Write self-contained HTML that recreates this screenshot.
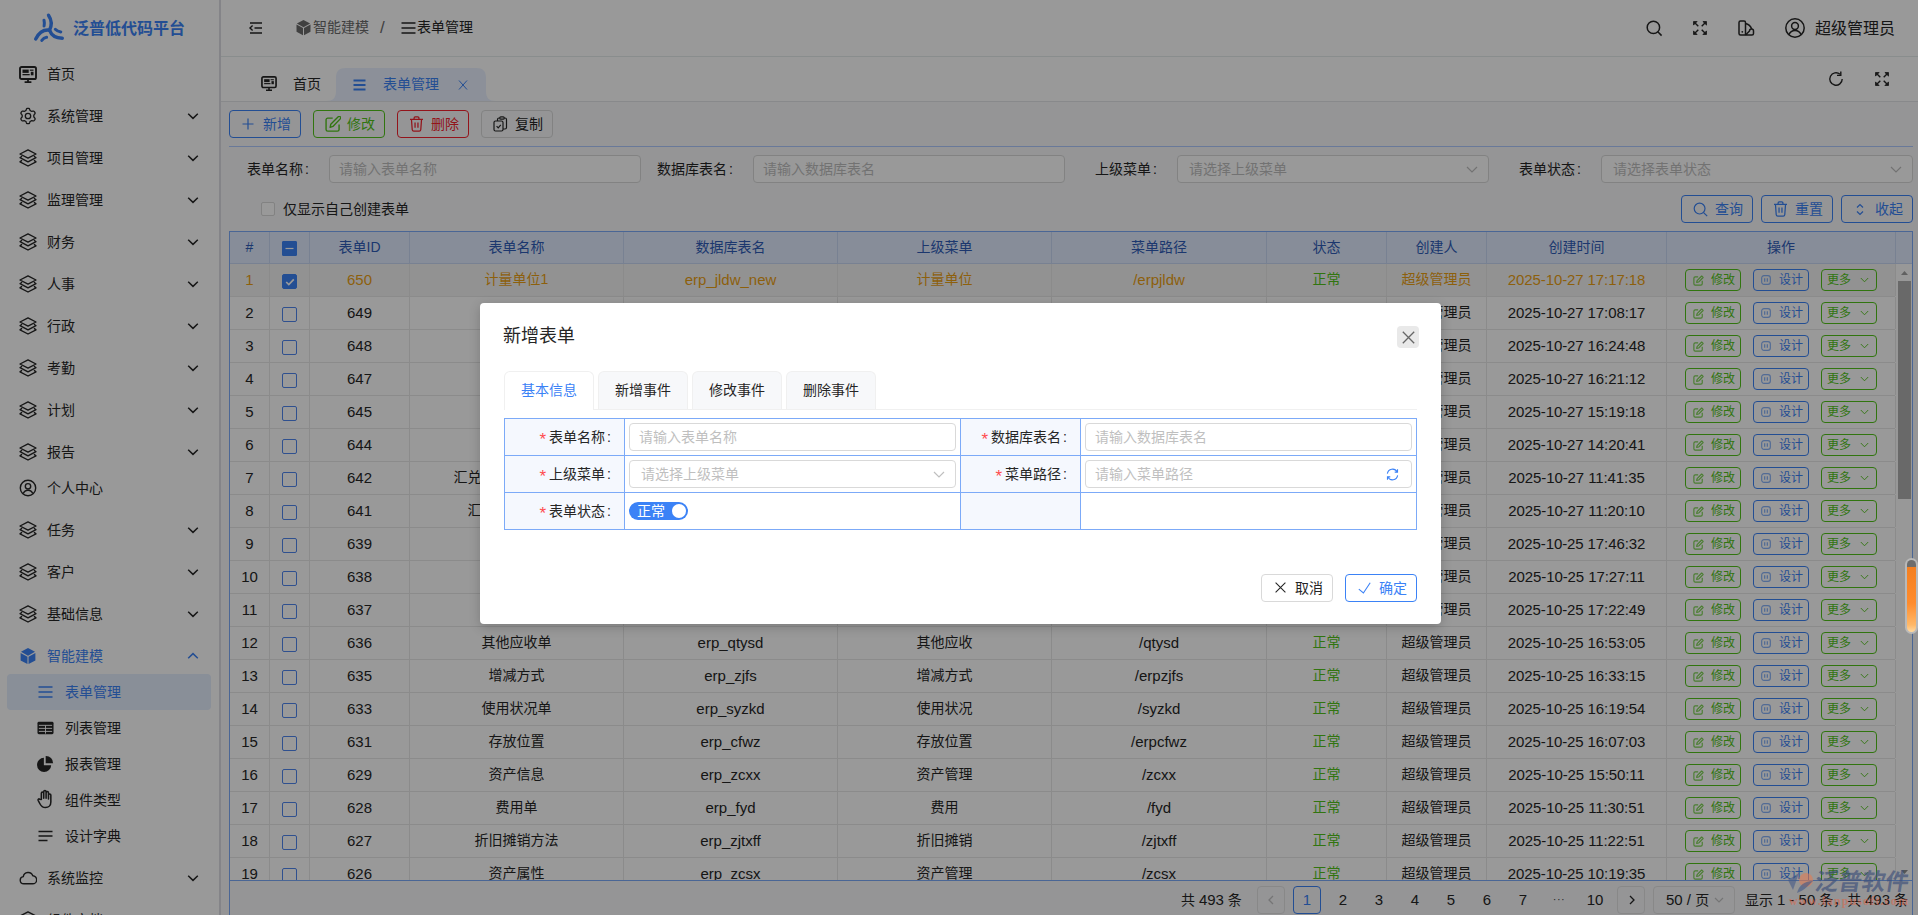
<!DOCTYPE html>
<html lang="zh-CN"><head><meta charset="utf-8"><title>泛普低代码平台</title>
<style>
*{box-sizing:border-box;margin:0;padding:0}
html,body{width:1918px;height:915px;overflow:hidden;background:#fff}
body{font-family:"Liberation Sans","Noto Sans CJK SC",sans-serif;font-size:14px;color:#262626;position:relative}
.abs{position:absolute}
i,b{font-style:normal;font-weight:normal}
#side{position:absolute;left:0;top:0;width:221px;height:915px;background:#fff;border-right:2px solid #dcdce3;overflow:hidden}
#logo{position:absolute;left:73px;top:17px;font-size:16px;font-weight:bold;color:#3b82f6;line-height:24px;white-space:nowrap}
.m{position:absolute;left:0;width:219px;height:36px;line-height:36px;color:#262626}
.m .mi{position:absolute;left:19px;top:9px;width:18px;height:18px}
.m .t{position:absolute;left:47px;top:0;white-space:nowrap}
.m .arr{position:absolute;left:187px;top:12px;width:12px;height:12px}
.m.on{color:#3b82f6}
.s{position:absolute;left:7px;width:204px;height:36px;line-height:36px;border-radius:4px;color:#262626}
.s .si{position:absolute;left:30px;top:10px;width:17px;height:16px}
.s .t{position:absolute;left:58px;top:0;white-space:nowrap}
.s.on{background:#e4eefe;color:#3b82f6}
#hdr{position:absolute;left:221px;top:0;width:1697px;height:57px;background:#fff;border-bottom:1px solid #e4ebec}
#tabs{position:absolute;left:221px;top:57px;width:1697px;height:45px;background:#fff;border-bottom:1px solid #e3e5e8}
#main{position:absolute;left:221px;top:102px;width:1697px;height:813px;background:#f8f9fb}
.btn{position:absolute;height:28px;line-height:26px;border:1px solid #d9d9d9;border-radius:4px;font-size:14px;white-space:nowrap}
.btn svg{position:absolute}
.btn .t{position:absolute;top:0}
.inp{position:absolute;height:28px;border:1px solid #d9d9d9;border-radius:4px;background:#fff;line-height:26px;color:#bfbfbf;padding-left:9px;font-size:14px;white-space:nowrap}
.lbl{position:absolute;line-height:28px;white-space:nowrap;color:#262626}
.c{margin-left:2px}
#wrap{position:absolute;left:229px;top:231px;width:1684px;height:700px;border:1px solid #7caaf8;border-bottom:none}
#tbl{position:absolute;left:230px;top:232px;width:1682px;height:648px;background:#fff;overflow:hidden}
.th{position:absolute;top:0;height:32px;line-height:30px;text-align:center;color:#2f5cb8;background:#e2ecff;border-right:1px solid #c9d8f4;border-bottom:1px solid #c9d8f4;white-space:nowrap}
.tr{position:absolute;left:0;width:1665px;height:33px;border-bottom:1px solid #e8e8e8;background:#fff}
.tr.sel{background:#f4f4f4;color:#eba014}
.td{position:absolute;top:0;height:32px;line-height:31px;text-align:center;border-right:1px solid #e8e8e8;white-space:nowrap;overflow:hidden}
.en{font-size:15px}
.dt{font-size:15px;letter-spacing:-.1px}
.ok{color:#52c41a}
.cb{position:absolute;left:12px;top:10px;width:15px;height:15px;border:1px solid #4f86ee;border-radius:2px;background:#fff}
.cb.on{background:#3b82f6;border-color:#3b82f6}
.ob{position:absolute;top:5px;height:22px;width:56px;border-radius:4px;border:1px solid;font-size:12px;line-height:21px;white-space:nowrap}
.ob.g{border-color:#52c41a;color:#52c41a}
.ob.b{border-color:#3b82f6;color:#3b82f6}
.ob svg{position:absolute}
.ob .t{position:absolute;top:0}
#mask{position:absolute;left:0;top:0;width:1918px;height:915px;background:rgba(0,0,0,.4)}
#modal{position:absolute;left:480px;top:303px;width:961px;height:321px;background:#fff;border-radius:4px;box-shadow:0 3px 12px rgba(0,0,0,.2)}
.mt{position:absolute;top:68px;height:39px;width:90px;border:1px solid #f0f0f0;border-bottom:none;border-radius:6px 6px 0 0;background:#f7f8fa;text-align:center;line-height:36px;color:#262626}
.mt.on{background:#fff;color:#3b82f6}
.fl{position:absolute;background:#f5f8fe;text-align:right;padding-right:13px;line-height:38px;white-space:nowrap;color:#262626}
.fl i{color:#ff4d4f;margin-right:3px;font-size:17px;position:relative;top:3px;line-height:20px}
.ln{position:absolute;background:#7caaf8}
.pg{position:absolute;top:886px;height:28px;line-height:27px;text-align:center;white-space:nowrap;color:#262626;font-size:15px}
</style></head><body>

<div id="side">
<svg class="abs" style="left:32px;top:12px;width:32px;height:32px" viewBox="0 0 32 32"><g fill="none" stroke="#3b82f6" stroke-linecap="round"><path d="M16.5 3.2c3.6 5.4 3.3 10.5 1 15" stroke-width="3.4"/><path d="M12 8.2c.5 2.2.5 4.2.1 5.8" stroke-width="3"/><path d="M17.5 18.2c-5.5-.8-10.5 2.3-13.8 8.8" stroke-width="3.4"/><path d="M14.6 25.3c-1.9.2-3.6 1.3-4.8 3.1" stroke-width="3"/><path d="M17.5 18.2c1.8 5 6.5 8 12.8 8" stroke-width="3.4"/><path d="M23.3 17.3c1.4 1.5 3.3 2.3 5.5 2.6" stroke-width="3"/></g></svg>
<div id="logo">泛普低代码平台</div>
<div class="m" style="top:56px"><svg class="mi" style="top:9.5px;height:17px" viewBox="0 0 18 17"><rect x="1" y="1" width="16" height="12" rx="1.6" fill="none" stroke="currentColor" stroke-width="1.9"/><rect x="3.5" y="3.6" width="6.2" height="3.3" fill="currentColor"/><rect x="10.8" y="3.6" width="3.7" height="1.2" fill="currentColor"/><rect x="11.8" y="5.8" width="2.7" height="3.5" fill="currentColor"/><rect x="3.5" y="8" width="7.2" height="1.3" fill="currentColor"/><path d="M9 13v2.4M5.6 16.1h6.8" stroke="currentColor" stroke-width="1.8" fill="none"/></svg><span class="t">首页</span></div>
<div class="m" style="top:98px"><svg class="mi" viewBox="0 0 18 18"><path d="M14.8 9 14.8 9.5 14.9 10 15.5 10.7 16.1 11.6 16 12.3 15.7 12.8 15.3 13.4 14.8 13.9 13.8 13.8 12.8 13.6 12.3 13.8 11.9 14 11.5 14.3 11 14.6 10.7 15.5 10.3 16.4 9.7 16.7 9 16.7 8.3 16.7 7.7 16.4 7.3 15.5 7 14.6 6.5 14.3 6.1 14 5.7 13.8 5.2 13.6 4.2 13.8 3.2 13.9 2.7 13.4 2.3 12.9 2 12.3 1.9 11.6 2.5 10.7 3.1 10 3.2 9.5 3.2 9 3.2 8.5 3.1 8 2.5 7.3 1.9 6.4 2 5.7 2.3 5.1 2.7 4.6 3.2 4.1 4.2 4.2 5.2 4.4 5.7 4.2 6.1 4 6.5 3.7 7 3.4 7.3 2.5 7.7 1.6 8.3 1.3 9 1.3 9.7 1.3 10.3 1.6 10.7 2.5 11 3.4 11.5 3.7 11.9 4 12.3 4.2 12.8 4.4 13.8 4.2 14.8 4.1 15.3 4.6 15.7 5.2 16 5.7 16.1 6.4 15.5 7.3 14.9 8 14.8 8.5Z" fill="none" stroke="currentColor" stroke-width="1.3" stroke-linejoin="round"/><circle cx="9" cy="9" r="2.7" fill="none" stroke="currentColor" stroke-width="1.3"/></svg><span class="t">系统管理</span><svg class="arr" viewBox="0 0 12 12"><path d="M1.2 3.8 6 8.4l4.8-4.6" fill="none" stroke="currentColor" stroke-width="1.5"/></svg></div>
<div class="m" style="top:140px"><svg class="mi" viewBox="0 0 18 18"><path d="M9 .9 17 5 9 9.1 1 5ZM2.6 7.5 1 8.7l8 4.2 8-4.2-1.6-1.2M2.6 11.6 1 12.8 9 17l8-4.2-1.6-1.2" fill="none" stroke="currentColor" stroke-width="1.4" stroke-linejoin="round" stroke-linecap="round"/></svg><span class="t">项目管理</span><svg class="arr" viewBox="0 0 12 12"><path d="M1.2 3.8 6 8.4l4.8-4.6" fill="none" stroke="currentColor" stroke-width="1.5"/></svg></div>
<div class="m" style="top:182px"><svg class="mi" viewBox="0 0 18 18"><path d="M9 .9 17 5 9 9.1 1 5ZM2.6 7.5 1 8.7l8 4.2 8-4.2-1.6-1.2M2.6 11.6 1 12.8 9 17l8-4.2-1.6-1.2" fill="none" stroke="currentColor" stroke-width="1.4" stroke-linejoin="round" stroke-linecap="round"/></svg><span class="t">监理管理</span><svg class="arr" viewBox="0 0 12 12"><path d="M1.2 3.8 6 8.4l4.8-4.6" fill="none" stroke="currentColor" stroke-width="1.5"/></svg></div>
<div class="m" style="top:224px"><svg class="mi" viewBox="0 0 18 18"><path d="M9 .9 17 5 9 9.1 1 5ZM2.6 7.5 1 8.7l8 4.2 8-4.2-1.6-1.2M2.6 11.6 1 12.8 9 17l8-4.2-1.6-1.2" fill="none" stroke="currentColor" stroke-width="1.4" stroke-linejoin="round" stroke-linecap="round"/></svg><span class="t">财务</span><svg class="arr" viewBox="0 0 12 12"><path d="M1.2 3.8 6 8.4l4.8-4.6" fill="none" stroke="currentColor" stroke-width="1.5"/></svg></div>
<div class="m" style="top:266px"><svg class="mi" viewBox="0 0 18 18"><path d="M9 .9 17 5 9 9.1 1 5ZM2.6 7.5 1 8.7l8 4.2 8-4.2-1.6-1.2M2.6 11.6 1 12.8 9 17l8-4.2-1.6-1.2" fill="none" stroke="currentColor" stroke-width="1.4" stroke-linejoin="round" stroke-linecap="round"/></svg><span class="t">人事</span><svg class="arr" viewBox="0 0 12 12"><path d="M1.2 3.8 6 8.4l4.8-4.6" fill="none" stroke="currentColor" stroke-width="1.5"/></svg></div>
<div class="m" style="top:308px"><svg class="mi" viewBox="0 0 18 18"><path d="M9 .9 17 5 9 9.1 1 5ZM2.6 7.5 1 8.7l8 4.2 8-4.2-1.6-1.2M2.6 11.6 1 12.8 9 17l8-4.2-1.6-1.2" fill="none" stroke="currentColor" stroke-width="1.4" stroke-linejoin="round" stroke-linecap="round"/></svg><span class="t">行政</span><svg class="arr" viewBox="0 0 12 12"><path d="M1.2 3.8 6 8.4l4.8-4.6" fill="none" stroke="currentColor" stroke-width="1.5"/></svg></div>
<div class="m" style="top:350px"><svg class="mi" viewBox="0 0 18 18"><path d="M9 .9 17 5 9 9.1 1 5ZM2.6 7.5 1 8.7l8 4.2 8-4.2-1.6-1.2M2.6 11.6 1 12.8 9 17l8-4.2-1.6-1.2" fill="none" stroke="currentColor" stroke-width="1.4" stroke-linejoin="round" stroke-linecap="round"/></svg><span class="t">考勤</span><svg class="arr" viewBox="0 0 12 12"><path d="M1.2 3.8 6 8.4l4.8-4.6" fill="none" stroke="currentColor" stroke-width="1.5"/></svg></div>
<div class="m" style="top:392px"><svg class="mi" viewBox="0 0 18 18"><path d="M9 .9 17 5 9 9.1 1 5ZM2.6 7.5 1 8.7l8 4.2 8-4.2-1.6-1.2M2.6 11.6 1 12.8 9 17l8-4.2-1.6-1.2" fill="none" stroke="currentColor" stroke-width="1.4" stroke-linejoin="round" stroke-linecap="round"/></svg><span class="t">计划</span><svg class="arr" viewBox="0 0 12 12"><path d="M1.2 3.8 6 8.4l4.8-4.6" fill="none" stroke="currentColor" stroke-width="1.5"/></svg></div>
<div class="m" style="top:434px"><svg class="mi" viewBox="0 0 18 18"><path d="M9 .9 17 5 9 9.1 1 5ZM2.6 7.5 1 8.7l8 4.2 8-4.2-1.6-1.2M2.6 11.6 1 12.8 9 17l8-4.2-1.6-1.2" fill="none" stroke="currentColor" stroke-width="1.4" stroke-linejoin="round" stroke-linecap="round"/></svg><span class="t">报告</span><svg class="arr" viewBox="0 0 12 12"><path d="M1.2 3.8 6 8.4l4.8-4.6" fill="none" stroke="currentColor" stroke-width="1.5"/></svg></div>
<div class="m" style="top:470px"><svg class="mi" viewBox="0 0 18 18"><circle cx="9" cy="9" r="7.7" fill="none" stroke="currentColor" stroke-width="1.4"/><circle cx="9" cy="7.3" r="2.7" fill="none" stroke="currentColor" stroke-width="1.4"/><path d="M4.2 14.6c.9-2.4 2.6-3.4 4.8-3.4s3.9 1 4.8 3.4" fill="none" stroke="currentColor" stroke-width="1.4"/></svg><span class="t">个人中心</span></div>
<div class="m" style="top:512px"><svg class="mi" viewBox="0 0 18 18"><path d="M9 .9 17 5 9 9.1 1 5ZM2.6 7.5 1 8.7l8 4.2 8-4.2-1.6-1.2M2.6 11.6 1 12.8 9 17l8-4.2-1.6-1.2" fill="none" stroke="currentColor" stroke-width="1.4" stroke-linejoin="round" stroke-linecap="round"/></svg><span class="t">任务</span><svg class="arr" viewBox="0 0 12 12"><path d="M1.2 3.8 6 8.4l4.8-4.6" fill="none" stroke="currentColor" stroke-width="1.5"/></svg></div>
<div class="m" style="top:554px"><svg class="mi" viewBox="0 0 18 18"><path d="M9 .9 17 5 9 9.1 1 5ZM2.6 7.5 1 8.7l8 4.2 8-4.2-1.6-1.2M2.6 11.6 1 12.8 9 17l8-4.2-1.6-1.2" fill="none" stroke="currentColor" stroke-width="1.4" stroke-linejoin="round" stroke-linecap="round"/></svg><span class="t">客户</span><svg class="arr" viewBox="0 0 12 12"><path d="M1.2 3.8 6 8.4l4.8-4.6" fill="none" stroke="currentColor" stroke-width="1.5"/></svg></div>
<div class="m" style="top:596px"><svg class="mi" viewBox="0 0 18 18"><path d="M9 .9 17 5 9 9.1 1 5ZM2.6 7.5 1 8.7l8 4.2 8-4.2-1.6-1.2M2.6 11.6 1 12.8 9 17l8-4.2-1.6-1.2" fill="none" stroke="currentColor" stroke-width="1.4" stroke-linejoin="round" stroke-linecap="round"/></svg><span class="t">基础信息</span><svg class="arr" viewBox="0 0 12 12"><path d="M1.2 3.8 6 8.4l4.8-4.6" fill="none" stroke="currentColor" stroke-width="1.5"/></svg></div>
<div class="m on" style="top:638px"><svg class="mi" viewBox="0 0 20 20"><path d="M10 1.2 17.8 5.4 10 9.6 2.2 5.4Z" fill="currentColor"/><path d="M1.8 6.6 9.4 10.7V19L1.8 14.9Z" fill="currentColor"/><path d="M18.2 6.6 10.6 10.7V19l7.6-4.1Z" fill="currentColor"/></svg><span class="t">智能建模</span><svg class="arr" viewBox="0 0 12 12"><path d="M1.2 8.2 6 3.6l4.8 4.6" fill="none" stroke="currentColor" stroke-width="1.5"/></svg></div>
<div class="m" style="top:860px"><svg class="mi" viewBox="0 0 18 18"><path d="M4.8 14.8a3.6 3.6 0 0 1-.5-7.16A4.9 4.9 0 0 1 13.8 6.8a4 4 0 0 1-.3 8Z" fill="none" stroke="currentColor" stroke-width="1.4" stroke-linejoin="round"/></svg><span class="t">系统监控</span><svg class="arr" viewBox="0 0 12 12"><path d="M1.2 3.8 6 8.4l4.8-4.6" fill="none" stroke="currentColor" stroke-width="1.5"/></svg></div>
<div class="m" style="top:902px"><svg class="mi" viewBox="0 0 18 18"><path d="M9 .9 17 5 9 9.1 1 5ZM2.6 7.5 1 8.7l8 4.2 8-4.2-1.6-1.2M2.6 11.6 1 12.8 9 17l8-4.2-1.6-1.2" fill="none" stroke="currentColor" stroke-width="1.4" stroke-linejoin="round" stroke-linecap="round"/></svg><span class="t">组件文档</span><svg class="arr" viewBox="0 0 12 12"><path d="M1.2 3.8 6 8.4l4.8-4.6" fill="none" stroke="currentColor" stroke-width="1.5"/></svg></div>
<div class="s on" style="top:674px"><svg class="si" viewBox="0 0 16 16"><path d="M1 3h14M1 8h14M1 13h14" stroke="currentColor" stroke-width="1.6" fill="none"/></svg><span class="t">表单管理</span></div>
<div class="s" style="top:710px"><svg class="si" viewBox="0 0 18 14"><rect x=".5" y=".5" width="17" height="13" rx="1.5" fill="currentColor"/><path d="M2 4.2h14M2 7.4h14M2 10.6h14" stroke="#fff" stroke-width="1"/><path d="M9 4.2v8.8" stroke="#fff" stroke-width="1"/></svg><span class="t">列表管理</span></div>
<div class="s" style="top:746px"><svg class="si" style="top:9px;width:18px;height:18px;left:29px" viewBox="0 0 16 16"><path d="M7 2.5A6.3 6.3 0 1 0 13.5 9H7Z" fill="currentColor"/><path d="M8.6.8A6.3 6.3 0 0 1 15.2 7.4H8.6Z" fill="currentColor"/></svg><span class="t">报表管理</span></div>
<div class="s" style="top:782px"><svg class="si" style="top:7px;height:21px;width:19px;left:29px" viewBox="0 0 16 17"><path d="M4.5 8.5V3.2a1 1 0 0 1 2 0V7.5 2a1 1 0 0 1 2 0V7.5 2.8a1 1 0 0 1 2 0V8 4.8a1 1 0 0 1 2 0V10.5c0 3-1.8 4.8-4.6 4.8-2.4 0-3.6-1.2-4.6-3.2L1.8 9.2c-.4-.9.6-1.6 1.3-.9Z" fill="none" stroke="currentColor" stroke-width="1.3" stroke-linejoin="round"/></svg><span class="t">组件类型</span></div>
<div class="s" style="top:818px"><svg class="si" viewBox="0 0 16 16"><path d="M1 3.5h14M1 8h14M1 12.5h9" stroke="currentColor" stroke-width="1.4" fill="none"/></svg><span class="t">设计字典</span></div>
</div>
<div id="hdr">
<svg class="abs" style="left:27px;top:20px;width:16px;height:16px" viewBox="0 0 16 16"><path d="M2 3h12M6.5 8H14M2 13h12M4.6 5.6 2 8l2.6 2.4" fill="none" stroke="#262626" stroke-width="1.4"/></svg>
<svg class="abs" style="left:74px;top:19px;width:17px;height:17px;color:#6b6b6b" viewBox="0 0 20 20"><path d="M10 1.2 17.8 5.4 10 9.6 2.2 5.4Z" fill="currentColor"/><path d="M1.8 6.6 9.4 10.7V19L1.8 14.9Z" fill="currentColor"/><path d="M18.2 6.6 10.6 10.7V19l7.6-4.1Z" fill="currentColor"/></svg>
<div class="abs" style="left:92px;top:16px;line-height:22px;color:#6b6b6b;white-space:nowrap">智能建模</div>
<div class="abs" style="left:159px;top:17px;line-height:22px;color:#6b6b6b;font-size:17px">/</div>
<svg class="abs" style="left:180px;top:21px;width:15px;height:14px" viewBox="0 0 15 14"><path d="M.5 2h14M.5 7h14M.5 12h14" stroke="#262626" stroke-width="1.5" fill="none"/></svg>
<div class="abs" style="left:196px;top:16px;line-height:22px;color:#262626;white-space:nowrap">表单管理</div>
<svg class="abs" style="left:1424px;top:19px;width:18px;height:18px" viewBox="0 0 18 18"><circle cx="8.4" cy="8.4" r="6.2" fill="none" stroke="#262626" stroke-width="1.5"/><path d="M12.8 12.8 16.6 16.6" stroke="#262626" stroke-width="1.5"/></svg>
<svg class="abs" style="left:1471px;top:20px;width:16px;height:16px" viewBox="0 0 16 16"><g fill="#262626" stroke="#262626" stroke-width="1.4"><path d="M1.5 1.5h3.6l-3.6 3.6ZM14.5 1.5v3.6l-3.6-3.6ZM14.5 14.5h-3.6l3.6-3.6ZM1.5 14.5v-3.6l3.6 3.6Z" stroke-width=".8" stroke-linejoin="round"/><path d="M3 3l3.3 3.3M13 3 9.7 6.3M13 13 9.7 9.7M3 13l3.3-3.3" fill="none"/></g></svg>
<svg class="abs" style="left:1516px;top:19px;width:18px;height:18px" viewBox="0 0 18 18"><g fill="none" stroke="#262626" stroke-width="1.5" stroke-linejoin="round"><path d="M8.5 16H3.5a1.5 1.5 0 0 1-1.5-1.5V3.5A1.5 1.5 0 0 1 3.5 2H7a1.5 1.5 0 0 1 1.5 1.5V16Z"/><path d="M8.5 4.5c3 .6 5.2 2.6 6.2 5.5"/><path d="M8.5 16H15a1.5 1.5 0 0 0 1.5-1.5V12a2 2 0 0 0-4 0l-4 4"/></g><circle cx="5.3" cy="12.8" r=".9" fill="#262626"/></svg>
<svg class="abs" style="left:1563px;top:17px;width:22px;height:22px" viewBox="0 0 22 22"><g fill="none" stroke="#262626" stroke-width="1.5"><circle cx="11" cy="11" r="9.2"/><circle cx="11" cy="9" r="3.4"/><path d="M4.8 17.8c1.2-3 3.4-4.4 6.2-4.4s5 1.4 6.2 4.4"/></g></svg>
<div class="abs" style="left:1594px;top:17px;font-size:16px;line-height:24px;color:#262626;white-space:nowrap">超级管理员</div>
</div>
<div id="tabs">
<svg class="abs" style="left:105px;top:11px;width:170px;height:33px" viewBox="0 0 170 33"><path d="M0 33C7 33 10 30 10 23V10C10 3 13 0 20 0H150c7 0 10 3 10 10V23c0 7 3 10 10 10Z" fill="#e9f1ff"/></svg>
<svg class="abs" style="left:40px;top:19px;width:16px;height:15px;color:#262626" viewBox="0 0 18 17"><rect x="1" y="1" width="16" height="12" rx="1.6" fill="none" stroke="currentColor" stroke-width="1.9"/><rect x="3.5" y="3.6" width="6.2" height="3.3" fill="currentColor"/><rect x="10.8" y="3.6" width="3.7" height="1.2" fill="currentColor"/><rect x="11.8" y="5.8" width="2.7" height="3.5" fill="currentColor"/><rect x="3.5" y="8" width="7.2" height="1.3" fill="currentColor"/><path d="M9 13v2.4M5.6 16.1h6.8" stroke="currentColor" stroke-width="1.8" fill="none"/></svg>
<div class="abs" style="left:72px;top:16px;line-height:22px;white-space:nowrap">首页</div>
<svg class="abs" style="left:132px;top:22px;width:13px;height:12px" viewBox="0 0 13 12"><path d="M.5 1.5h12M.5 6h12M.5 10.5h12" stroke="#3b82f6" stroke-width="1.8" fill="none"/></svg>
<div class="abs" style="left:162px;top:16px;line-height:22px;color:#3b82f6;white-space:nowrap">表单管理</div>
<svg class="abs" style="left:237px;top:23px;width:10px;height:10px" viewBox="0 0 10 10"><path d="M1 .5l8 9M9 .5 1 9.5" stroke="#3b82f6" stroke-width="1"/></svg>
<svg class="abs" style="left:1607px;top:14px;width:16px;height:16px" viewBox="0 0 16 16"><path d="M14.2 8a6.2 6.2 0 1 1-2.2-4.74" fill="none" stroke="#262626" stroke-width="1.4"/><path d="M12.8.6v3.8H9" fill="none" stroke="#262626" stroke-width="1.4"/></svg>
<svg class="abs" style="left:1653px;top:14px;width:16px;height:16px" viewBox="0 0 16 16"><g fill="#262626" stroke="#262626" stroke-width="1.4"><path d="M1.5 1.5h3.6l-3.6 3.6ZM14.5 1.5v3.6l-3.6-3.6ZM14.5 14.5h-3.6l3.6-3.6ZM1.5 14.5v-3.6l3.6 3.6Z" stroke-width=".8" stroke-linejoin="round"/><path d="M3 3l3.3 3.3M13 3 9.7 6.3M13 13 9.7 9.7M3 13l3.3-3.3" fill="none"/></g></svg>
</div>
<div id="main"></div>
<div class="btn" style="left:229px;top:110px;width:72px;border-color:#3b82f6;color:#3b82f6"><svg style="left:12px;top:7px;width:12px;height:12px" viewBox="0 0 12 12"><path d="M6 .5v11M.5 6h11" stroke="currentColor" stroke-width="1.2"/></svg><span class="t" style="left:33px">新增</span></div>
<div class="btn" style="left:313px;top:110px;width:72px;border-color:#52c41a;color:#52c41a"><svg style="left:11px;top:5px;width:16px;height:16px" viewBox="0 0 15 15"><path d="M7.2 2H2.6A1.6 1.6 0 0 0 1 3.6v9A1.6 1.6 0 0 0 2.6 14.2h9a1.6 1.6 0 0 0 1.6-1.6V8" fill="none" stroke="currentColor" stroke-width="1.3"/><path d="M4.8 10.6 5.4 7.8 12.4.8a1.3 1.3 0 0 1 1.9 1.9L7.4 9.8Z" fill="none" stroke="currentColor" stroke-width="1.3" stroke-linejoin="round"/></svg><span class="t" style="left:33px">修改</span></div>
<div class="btn" style="left:397px;top:110px;width:72px;border-color:#f5222d;color:#f5222d"><svg style="left:11px;top:5px;width:15px;height:16px" viewBox="0 0 15 16.5"><path d="M.8 3.6h13.4M5 3.6V2.2A1.2 1.2 0 0 1 6.2 1h2.6A1.2 1.2 0 0 1 10 2.2v1.4M2.3 3.6l.8 10.6a1.6 1.6 0 0 0 1.6 1.4h5.6a1.6 1.6 0 0 0 1.6-1.4l.8-10.6M6 6.8v5.4M9 6.8v5.4" fill="none" stroke="currentColor" stroke-width="1.3"/></svg><span class="t" style="left:33px">删除</span></div>
<div class="btn" style="left:481px;top:110px;width:72px;border-color:#d9d9d9;color:#262626"><svg style="left:11px;top:5px;width:15px;height:16px" viewBox="0 0 15 16"><g fill="none" stroke="currentColor" stroke-width="1.2"><rect x="1" y="5" width="9" height="10" rx="1.5"/><path d="M4.5 5V3.5A1.5 1.5 0 0 1 6 2h.8M11.2 2H12a1.5 1.5 0 0 1 1.5 1.5v8A1.5 1.5 0 0 1 12 13h-2"/><rect x="6.8" y=".8" width="4.4" height="2.4" rx="1"/><path d="M3.6 10.2l1.6 1.6 2.6-3"/></g></svg><span class="t" style="left:33px">复制</span></div>
<div class="abs" style="left:229px;top:146px;width:1684px;height:1px;background:#afcaff"></div>
<div class="lbl" style="left:247px;top:155px">表单名称<b class="c">:</b></div><div class="inp" style="left:329px;top:155px;width:312px">请输入表单名称</div>
<div class="lbl" style="left:657px;top:155px">数据库表名<b class="c">:</b></div><div class="inp" style="left:753px;top:155px;width:312px">请输入数据库表名</div>
<div class="lbl" style="left:1095px;top:155px">上级菜单<b class="c">:</b></div><div class="inp" style="left:1177px;top:155px;width:312px;padding-left:11px">请选择上级菜单<svg class="abs" style="right:10px;top:9px;width:12px;height:9px" viewBox="0 0 12 9"><path d="M1 2l5 5 5-5" fill="none" stroke="#bfbfbf" stroke-width="1.2"/></svg></div>
<div class="lbl" style="left:1519px;top:155px">表单状态<b class="c">:</b></div><div class="inp" style="left:1601px;top:155px;width:312px;padding-left:11px">请选择表单状态<svg class="abs" style="right:10px;top:9px;width:12px;height:9px" viewBox="0 0 12 9"><path d="M1 2l5 5 5-5" fill="none" stroke="#bfbfbf" stroke-width="1.2"/></svg></div>
<div class="abs" style="left:261px;top:202px;width:14px;height:14px;border:1px solid #d9d9d9;border-radius:2px;background:#fff"></div>
<div class="lbl" style="left:283px;top:195px">仅显示自己创建表单</div>
<div class="btn" style="left:1681px;top:195px;width:72px;border-color:#3b82f6;color:#3b82f6"><svg style="left:11px;top:6px;width:15px;height:15px" viewBox="0 0 15 15"><circle cx="6.6" cy="6.6" r="5.4" fill="none" stroke="currentColor" stroke-width="1.2"/><path d="M10.6 10.6 14.2 14.2" stroke="currentColor" stroke-width="1.2"/></svg><span class="t" style="left:33px">查询</span></div>
<div class="btn" style="left:1761px;top:195px;width:72px;border-color:#3b82f6;color:#3b82f6"><svg style="left:11px;top:5px;width:15px;height:16px" viewBox="0 0 15 16.5"><path d="M.8 3.6h13.4M5 3.6V2.2A1.2 1.2 0 0 1 6.2 1h2.6A1.2 1.2 0 0 1 10 2.2v1.4M2.3 3.6l.8 10.6a1.6 1.6 0 0 0 1.6 1.4h5.6a1.6 1.6 0 0 0 1.6-1.4l.8-10.6M6 6.8v5.4M9 6.8v5.4" fill="none" stroke="currentColor" stroke-width="1.3"/></svg><span class="t" style="left:33px">重置</span></div>
<div class="btn" style="left:1841px;top:195px;width:72px;border-color:#3b82f6;color:#3b82f6"><svg style="left:14px;top:7px;width:8px;height:13px" viewBox="0 0 8 13"><path d="M1 4.5 4 1.5l3 3M1 8.5l3 3 3-3" fill="none" stroke="currentColor" stroke-width="1.2"/></svg><span class="t" style="left:33px">收起</span></div>
<div id="wrap"></div>
<div id="tbl">
<div class="th" style="left:0px;width:40px">#</div>
<div class="th" style="left:40px;width:40px"><span class="cb on" style="top:9px;border-radius:1px"><svg class="abs" style="left:2px;top:5px;width:9px;height:3px" viewBox="0 0 9 3"><path d="M.5 1.5h8" stroke="#fff" stroke-width="1.2"/></svg></span></div>
<div class="th" style="left:80px;width:100px">表单ID</div>
<div class="th" style="left:180px;width:214px">表单名称</div>
<div class="th" style="left:394px;width:214px">数据库表名</div>
<div class="th" style="left:608px;width:214px">上级菜单</div>
<div class="th" style="left:822px;width:215px">菜单路径</div>
<div class="th" style="left:1037px;width:120px">状态</div>
<div class="th" style="left:1157px;width:100px">创建人</div>
<div class="th" style="left:1257px;width:180px">创建时间</div>
<div class="th" style="left:1437px;width:229px">操作</div>
<div class="th" style="left:1666px;width:17px;border-right:none"></div>
<div class="tr sel" style="top:32px">
<div class="td en" style="left:0px;width:40px">1</div>
<div class="td " style="left:40px;width:40px"><span class="cb on"><svg class="abs" style="left:1.5px;top:3px;width:10px;height:8px" viewBox="0 0 10 8"><path d="M1.2 4l2.6 2.6L8.8 1.4" fill="none" stroke="#fff" stroke-width="1.7"/></svg></span></div>
<div class="td en" style="left:80px;width:100px">650</div>
<div class="td " style="left:180px;width:214px">计量单位1</div>
<div class="td en" style="left:394px;width:214px">erp_jldw_new</div>
<div class="td " style="left:608px;width:214px">计量单位</div>
<div class="td en" style="left:822px;width:215px">/erpjldw</div>
<div class="td " style="left:1037px;width:120px"><span class="ok">正常</span></div>
<div class="td " style="left:1157px;width:100px">超级管理员</div>
<div class="td dt" style="left:1257px;width:180px">2025-10-27 17:17:18</div>
<div class="td " style="left:1437px;width:229px"><span class="ob g" style="left:18px"><svg style="left:7px;top:5px;width:11px;height:11px;opacity:.75" viewBox="0 0 15 15"><path d="M7 2.5H3A1.8 1.8 0 0 0 1.2 4.3V12A1.8 1.8 0 0 0 3 13.8h7.8A1.8 1.8 0 0 0 12.6 12V8" fill="none" stroke="currentColor" stroke-width="1.6"/><path d="M5 10.2 5.6 7.6 11.8 1.4l2 2L7.6 9.6Z" fill="none" stroke="currentColor" stroke-width="1.6" stroke-linejoin="round"/></svg><span class="t" style="left:25px">修改</span></span><span class="ob b" style="left:86px"><svg style="left:7px;top:5px;width:10px;height:10px;opacity:.6" viewBox="0 0 12 12"><rect x=".8" y=".8" width="10.4" height="10.4" rx="2.8" fill="none" stroke="currentColor" stroke-width="1.4"/><path d="M4.4 4v4M7.6 4v4" stroke="currentColor" stroke-width="1.5"/></svg><span class="t" style="left:25px">设计</span></span><span class="ob g" style="left:154px"><span class="t" style="left:5px">更多</span><svg style="left:38px;top:7px;width:9px;height:6px" viewBox="0 0 9 6"><path d="M.8 1l3.7 3.8L8.2 1" fill="none" stroke="currentColor" stroke-width=".9"/></svg></span></div>
</div>
<div class="tr" style="top:65px">
<div class="td en" style="left:0px;width:40px">2</div>
<div class="td " style="left:40px;width:40px"><span class="cb"></span></div>
<div class="td en" style="left:80px;width:100px">649</div>
<div class="td " style="left:180px;width:214px">计量单位</div>
<div class="td en" style="left:394px;width:214px">erp_jldw</div>
<div class="td " style="left:608px;width:214px">基础数据</div>
<div class="td en" style="left:822px;width:215px">/jldw</div>
<div class="td " style="left:1037px;width:120px"><span class="ok">正常</span></div>
<div class="td " style="left:1157px;width:100px">超级管理员</div>
<div class="td dt" style="left:1257px;width:180px">2025-10-27 17:08:17</div>
<div class="td " style="left:1437px;width:229px"><span class="ob g" style="left:18px"><svg style="left:7px;top:5px;width:11px;height:11px;opacity:.75" viewBox="0 0 15 15"><path d="M7 2.5H3A1.8 1.8 0 0 0 1.2 4.3V12A1.8 1.8 0 0 0 3 13.8h7.8A1.8 1.8 0 0 0 12.6 12V8" fill="none" stroke="currentColor" stroke-width="1.6"/><path d="M5 10.2 5.6 7.6 11.8 1.4l2 2L7.6 9.6Z" fill="none" stroke="currentColor" stroke-width="1.6" stroke-linejoin="round"/></svg><span class="t" style="left:25px">修改</span></span><span class="ob b" style="left:86px"><svg style="left:7px;top:5px;width:10px;height:10px;opacity:.6" viewBox="0 0 12 12"><rect x=".8" y=".8" width="10.4" height="10.4" rx="2.8" fill="none" stroke="currentColor" stroke-width="1.4"/><path d="M4.4 4v4M7.6 4v4" stroke="currentColor" stroke-width="1.5"/></svg><span class="t" style="left:25px">设计</span></span><span class="ob g" style="left:154px"><span class="t" style="left:5px">更多</span><svg style="left:38px;top:7px;width:9px;height:6px" viewBox="0 0 9 6"><path d="M.8 1l3.7 3.8L8.2 1" fill="none" stroke="currentColor" stroke-width=".9"/></svg></span></div>
</div>
<div class="tr" style="top:98px">
<div class="td en" style="left:0px;width:40px">3</div>
<div class="td " style="left:40px;width:40px"><span class="cb"></span></div>
<div class="td en" style="left:80px;width:100px">648</div>
<div class="td " style="left:180px;width:214px">币种管理</div>
<div class="td en" style="left:394px;width:214px">erp_bzgl</div>
<div class="td " style="left:608px;width:214px">基础数据</div>
<div class="td en" style="left:822px;width:215px">/bzgl</div>
<div class="td " style="left:1037px;width:120px"><span class="ok">正常</span></div>
<div class="td " style="left:1157px;width:100px">超级管理员</div>
<div class="td dt" style="left:1257px;width:180px">2025-10-27 16:24:48</div>
<div class="td " style="left:1437px;width:229px"><span class="ob g" style="left:18px"><svg style="left:7px;top:5px;width:11px;height:11px;opacity:.75" viewBox="0 0 15 15"><path d="M7 2.5H3A1.8 1.8 0 0 0 1.2 4.3V12A1.8 1.8 0 0 0 3 13.8h7.8A1.8 1.8 0 0 0 12.6 12V8" fill="none" stroke="currentColor" stroke-width="1.6"/><path d="M5 10.2 5.6 7.6 11.8 1.4l2 2L7.6 9.6Z" fill="none" stroke="currentColor" stroke-width="1.6" stroke-linejoin="round"/></svg><span class="t" style="left:25px">修改</span></span><span class="ob b" style="left:86px"><svg style="left:7px;top:5px;width:10px;height:10px;opacity:.6" viewBox="0 0 12 12"><rect x=".8" y=".8" width="10.4" height="10.4" rx="2.8" fill="none" stroke="currentColor" stroke-width="1.4"/><path d="M4.4 4v4M7.6 4v4" stroke="currentColor" stroke-width="1.5"/></svg><span class="t" style="left:25px">设计</span></span><span class="ob g" style="left:154px"><span class="t" style="left:5px">更多</span><svg style="left:38px;top:7px;width:9px;height:6px" viewBox="0 0 9 6"><path d="M.8 1l3.7 3.8L8.2 1" fill="none" stroke="currentColor" stroke-width=".9"/></svg></span></div>
</div>
<div class="tr" style="top:131px">
<div class="td en" style="left:0px;width:40px">4</div>
<div class="td " style="left:40px;width:40px"><span class="cb"></span></div>
<div class="td en" style="left:80px;width:100px">647</div>
<div class="td " style="left:180px;width:214px">汇率管理</div>
<div class="td en" style="left:394px;width:214px">erp_hlgl</div>
<div class="td " style="left:608px;width:214px">基础数据</div>
<div class="td en" style="left:822px;width:215px">/hlgl</div>
<div class="td " style="left:1037px;width:120px"><span class="ok">正常</span></div>
<div class="td " style="left:1157px;width:100px">超级管理员</div>
<div class="td dt" style="left:1257px;width:180px">2025-10-27 16:21:12</div>
<div class="td " style="left:1437px;width:229px"><span class="ob g" style="left:18px"><svg style="left:7px;top:5px;width:11px;height:11px;opacity:.75" viewBox="0 0 15 15"><path d="M7 2.5H3A1.8 1.8 0 0 0 1.2 4.3V12A1.8 1.8 0 0 0 3 13.8h7.8A1.8 1.8 0 0 0 12.6 12V8" fill="none" stroke="currentColor" stroke-width="1.6"/><path d="M5 10.2 5.6 7.6 11.8 1.4l2 2L7.6 9.6Z" fill="none" stroke="currentColor" stroke-width="1.6" stroke-linejoin="round"/></svg><span class="t" style="left:25px">修改</span></span><span class="ob b" style="left:86px"><svg style="left:7px;top:5px;width:10px;height:10px;opacity:.6" viewBox="0 0 12 12"><rect x=".8" y=".8" width="10.4" height="10.4" rx="2.8" fill="none" stroke="currentColor" stroke-width="1.4"/><path d="M4.4 4v4M7.6 4v4" stroke="currentColor" stroke-width="1.5"/></svg><span class="t" style="left:25px">设计</span></span><span class="ob g" style="left:154px"><span class="t" style="left:5px">更多</span><svg style="left:38px;top:7px;width:9px;height:6px" viewBox="0 0 9 6"><path d="M.8 1l3.7 3.8L8.2 1" fill="none" stroke="currentColor" stroke-width=".9"/></svg></span></div>
</div>
<div class="tr" style="top:164px">
<div class="td en" style="left:0px;width:40px">5</div>
<div class="td " style="left:40px;width:40px"><span class="cb"></span></div>
<div class="td en" style="left:80px;width:100px">645</div>
<div class="td " style="left:180px;width:214px">结算方式</div>
<div class="td en" style="left:394px;width:214px">erp_jsfs</div>
<div class="td " style="left:608px;width:214px">基础数据</div>
<div class="td en" style="left:822px;width:215px">/jsfs</div>
<div class="td " style="left:1037px;width:120px"><span class="ok">正常</span></div>
<div class="td " style="left:1157px;width:100px">超级管理员</div>
<div class="td dt" style="left:1257px;width:180px">2025-10-27 15:19:18</div>
<div class="td " style="left:1437px;width:229px"><span class="ob g" style="left:18px"><svg style="left:7px;top:5px;width:11px;height:11px;opacity:.75" viewBox="0 0 15 15"><path d="M7 2.5H3A1.8 1.8 0 0 0 1.2 4.3V12A1.8 1.8 0 0 0 3 13.8h7.8A1.8 1.8 0 0 0 12.6 12V8" fill="none" stroke="currentColor" stroke-width="1.6"/><path d="M5 10.2 5.6 7.6 11.8 1.4l2 2L7.6 9.6Z" fill="none" stroke="currentColor" stroke-width="1.6" stroke-linejoin="round"/></svg><span class="t" style="left:25px">修改</span></span><span class="ob b" style="left:86px"><svg style="left:7px;top:5px;width:10px;height:10px;opacity:.6" viewBox="0 0 12 12"><rect x=".8" y=".8" width="10.4" height="10.4" rx="2.8" fill="none" stroke="currentColor" stroke-width="1.4"/><path d="M4.4 4v4M7.6 4v4" stroke="currentColor" stroke-width="1.5"/></svg><span class="t" style="left:25px">设计</span></span><span class="ob g" style="left:154px"><span class="t" style="left:5px">更多</span><svg style="left:38px;top:7px;width:9px;height:6px" viewBox="0 0 9 6"><path d="M.8 1l3.7 3.8L8.2 1" fill="none" stroke="currentColor" stroke-width=".9"/></svg></span></div>
</div>
<div class="tr" style="top:197px">
<div class="td en" style="left:0px;width:40px">6</div>
<div class="td " style="left:40px;width:40px"><span class="cb"></span></div>
<div class="td en" style="left:80px;width:100px">644</div>
<div class="td " style="left:180px;width:214px">凭证类别</div>
<div class="td en" style="left:394px;width:214px">erp_pzlb</div>
<div class="td " style="left:608px;width:214px">基础数据</div>
<div class="td en" style="left:822px;width:215px">/pzlb</div>
<div class="td " style="left:1037px;width:120px"><span class="ok">正常</span></div>
<div class="td " style="left:1157px;width:100px">超级管理员</div>
<div class="td dt" style="left:1257px;width:180px">2025-10-27 14:20:41</div>
<div class="td " style="left:1437px;width:229px"><span class="ob g" style="left:18px"><svg style="left:7px;top:5px;width:11px;height:11px;opacity:.75" viewBox="0 0 15 15"><path d="M7 2.5H3A1.8 1.8 0 0 0 1.2 4.3V12A1.8 1.8 0 0 0 3 13.8h7.8A1.8 1.8 0 0 0 12.6 12V8" fill="none" stroke="currentColor" stroke-width="1.6"/><path d="M5 10.2 5.6 7.6 11.8 1.4l2 2L7.6 9.6Z" fill="none" stroke="currentColor" stroke-width="1.6" stroke-linejoin="round"/></svg><span class="t" style="left:25px">修改</span></span><span class="ob b" style="left:86px"><svg style="left:7px;top:5px;width:10px;height:10px;opacity:.6" viewBox="0 0 12 12"><rect x=".8" y=".8" width="10.4" height="10.4" rx="2.8" fill="none" stroke="currentColor" stroke-width="1.4"/><path d="M4.4 4v4M7.6 4v4" stroke="currentColor" stroke-width="1.5"/></svg><span class="t" style="left:25px">设计</span></span><span class="ob g" style="left:154px"><span class="t" style="left:5px">更多</span><svg style="left:38px;top:7px;width:9px;height:6px" viewBox="0 0 9 6"><path d="M.8 1l3.7 3.8L8.2 1" fill="none" stroke="currentColor" stroke-width=".9"/></svg></span></div>
</div>
<div class="tr" style="top:230px">
<div class="td en" style="left:0px;width:40px">7</div>
<div class="td " style="left:40px;width:40px"><span class="cb"></span></div>
<div class="td en" style="left:80px;width:100px">642</div>
<div class="td " style="left:180px;width:214px">汇兑损益结转凭证单</div>
<div class="td en" style="left:394px;width:214px">erp_hdsyjz</div>
<div class="td " style="left:608px;width:214px">总账管理</div>
<div class="td en" style="left:822px;width:215px">/hdsyjz</div>
<div class="td " style="left:1037px;width:120px"><span class="ok">正常</span></div>
<div class="td " style="left:1157px;width:100px">超级管理员</div>
<div class="td dt" style="left:1257px;width:180px">2025-10-27 11:41:35</div>
<div class="td " style="left:1437px;width:229px"><span class="ob g" style="left:18px"><svg style="left:7px;top:5px;width:11px;height:11px;opacity:.75" viewBox="0 0 15 15"><path d="M7 2.5H3A1.8 1.8 0 0 0 1.2 4.3V12A1.8 1.8 0 0 0 3 13.8h7.8A1.8 1.8 0 0 0 12.6 12V8" fill="none" stroke="currentColor" stroke-width="1.6"/><path d="M5 10.2 5.6 7.6 11.8 1.4l2 2L7.6 9.6Z" fill="none" stroke="currentColor" stroke-width="1.6" stroke-linejoin="round"/></svg><span class="t" style="left:25px">修改</span></span><span class="ob b" style="left:86px"><svg style="left:7px;top:5px;width:10px;height:10px;opacity:.6" viewBox="0 0 12 12"><rect x=".8" y=".8" width="10.4" height="10.4" rx="2.8" fill="none" stroke="currentColor" stroke-width="1.4"/><path d="M4.4 4v4M7.6 4v4" stroke="currentColor" stroke-width="1.5"/></svg><span class="t" style="left:25px">设计</span></span><span class="ob g" style="left:154px"><span class="t" style="left:5px">更多</span><svg style="left:38px;top:7px;width:9px;height:6px" viewBox="0 0 9 6"><path d="M.8 1l3.7 3.8L8.2 1" fill="none" stroke="currentColor" stroke-width=".9"/></svg></span></div>
</div>
<div class="tr" style="top:263px">
<div class="td en" style="left:0px;width:40px">8</div>
<div class="td " style="left:40px;width:40px"><span class="cb"></span></div>
<div class="td en" style="left:80px;width:100px">641</div>
<div class="td " style="left:180px;width:214px">汇兑损益结转单</div>
<div class="td en" style="left:394px;width:214px">erp_hdsy</div>
<div class="td " style="left:608px;width:214px">总账管理</div>
<div class="td en" style="left:822px;width:215px">/hdsy</div>
<div class="td " style="left:1037px;width:120px"><span class="ok">正常</span></div>
<div class="td " style="left:1157px;width:100px">超级管理员</div>
<div class="td dt" style="left:1257px;width:180px">2025-10-27 11:20:10</div>
<div class="td " style="left:1437px;width:229px"><span class="ob g" style="left:18px"><svg style="left:7px;top:5px;width:11px;height:11px;opacity:.75" viewBox="0 0 15 15"><path d="M7 2.5H3A1.8 1.8 0 0 0 1.2 4.3V12A1.8 1.8 0 0 0 3 13.8h7.8A1.8 1.8 0 0 0 12.6 12V8" fill="none" stroke="currentColor" stroke-width="1.6"/><path d="M5 10.2 5.6 7.6 11.8 1.4l2 2L7.6 9.6Z" fill="none" stroke="currentColor" stroke-width="1.6" stroke-linejoin="round"/></svg><span class="t" style="left:25px">修改</span></span><span class="ob b" style="left:86px"><svg style="left:7px;top:5px;width:10px;height:10px;opacity:.6" viewBox="0 0 12 12"><rect x=".8" y=".8" width="10.4" height="10.4" rx="2.8" fill="none" stroke="currentColor" stroke-width="1.4"/><path d="M4.4 4v4M7.6 4v4" stroke="currentColor" stroke-width="1.5"/></svg><span class="t" style="left:25px">设计</span></span><span class="ob g" style="left:154px"><span class="t" style="left:5px">更多</span><svg style="left:38px;top:7px;width:9px;height:6px" viewBox="0 0 9 6"><path d="M.8 1l3.7 3.8L8.2 1" fill="none" stroke="currentColor" stroke-width=".9"/></svg></span></div>
</div>
<div class="tr" style="top:296px">
<div class="td en" style="left:0px;width:40px">9</div>
<div class="td " style="left:40px;width:40px"><span class="cb"></span></div>
<div class="td en" style="left:80px;width:100px">639</div>
<div class="td " style="left:180px;width:214px">期间损益</div>
<div class="td en" style="left:394px;width:214px">erp_qjsy</div>
<div class="td " style="left:608px;width:214px">总账管理</div>
<div class="td en" style="left:822px;width:215px">/qjsy</div>
<div class="td " style="left:1037px;width:120px"><span class="ok">正常</span></div>
<div class="td " style="left:1157px;width:100px">超级管理员</div>
<div class="td dt" style="left:1257px;width:180px">2025-10-25 17:46:32</div>
<div class="td " style="left:1437px;width:229px"><span class="ob g" style="left:18px"><svg style="left:7px;top:5px;width:11px;height:11px;opacity:.75" viewBox="0 0 15 15"><path d="M7 2.5H3A1.8 1.8 0 0 0 1.2 4.3V12A1.8 1.8 0 0 0 3 13.8h7.8A1.8 1.8 0 0 0 12.6 12V8" fill="none" stroke="currentColor" stroke-width="1.6"/><path d="M5 10.2 5.6 7.6 11.8 1.4l2 2L7.6 9.6Z" fill="none" stroke="currentColor" stroke-width="1.6" stroke-linejoin="round"/></svg><span class="t" style="left:25px">修改</span></span><span class="ob b" style="left:86px"><svg style="left:7px;top:5px;width:10px;height:10px;opacity:.6" viewBox="0 0 12 12"><rect x=".8" y=".8" width="10.4" height="10.4" rx="2.8" fill="none" stroke="currentColor" stroke-width="1.4"/><path d="M4.4 4v4M7.6 4v4" stroke="currentColor" stroke-width="1.5"/></svg><span class="t" style="left:25px">设计</span></span><span class="ob g" style="left:154px"><span class="t" style="left:5px">更多</span><svg style="left:38px;top:7px;width:9px;height:6px" viewBox="0 0 9 6"><path d="M.8 1l3.7 3.8L8.2 1" fill="none" stroke="currentColor" stroke-width=".9"/></svg></span></div>
</div>
<div class="tr" style="top:329px">
<div class="td en" style="left:0px;width:40px">10</div>
<div class="td " style="left:40px;width:40px"><span class="cb"></span></div>
<div class="td en" style="left:80px;width:100px">638</div>
<div class="td " style="left:180px;width:214px">期末结转</div>
<div class="td en" style="left:394px;width:214px">erp_qmjz</div>
<div class="td " style="left:608px;width:214px">总账管理</div>
<div class="td en" style="left:822px;width:215px">/qmjz</div>
<div class="td " style="left:1037px;width:120px"><span class="ok">正常</span></div>
<div class="td " style="left:1157px;width:100px">超级管理员</div>
<div class="td dt" style="left:1257px;width:180px">2025-10-25 17:27:11</div>
<div class="td " style="left:1437px;width:229px"><span class="ob g" style="left:18px"><svg style="left:7px;top:5px;width:11px;height:11px;opacity:.75" viewBox="0 0 15 15"><path d="M7 2.5H3A1.8 1.8 0 0 0 1.2 4.3V12A1.8 1.8 0 0 0 3 13.8h7.8A1.8 1.8 0 0 0 12.6 12V8" fill="none" stroke="currentColor" stroke-width="1.6"/><path d="M5 10.2 5.6 7.6 11.8 1.4l2 2L7.6 9.6Z" fill="none" stroke="currentColor" stroke-width="1.6" stroke-linejoin="round"/></svg><span class="t" style="left:25px">修改</span></span><span class="ob b" style="left:86px"><svg style="left:7px;top:5px;width:10px;height:10px;opacity:.6" viewBox="0 0 12 12"><rect x=".8" y=".8" width="10.4" height="10.4" rx="2.8" fill="none" stroke="currentColor" stroke-width="1.4"/><path d="M4.4 4v4M7.6 4v4" stroke="currentColor" stroke-width="1.5"/></svg><span class="t" style="left:25px">设计</span></span><span class="ob g" style="left:154px"><span class="t" style="left:5px">更多</span><svg style="left:38px;top:7px;width:9px;height:6px" viewBox="0 0 9 6"><path d="M.8 1l3.7 3.8L8.2 1" fill="none" stroke="currentColor" stroke-width=".9"/></svg></span></div>
</div>
<div class="tr" style="top:362px">
<div class="td en" style="left:0px;width:40px">11</div>
<div class="td " style="left:40px;width:40px"><span class="cb"></span></div>
<div class="td en" style="left:80px;width:100px">637</div>
<div class="td " style="left:180px;width:214px">其他应付单</div>
<div class="td en" style="left:394px;width:214px">erp_qtyfd</div>
<div class="td " style="left:608px;width:214px">其他应付</div>
<div class="td en" style="left:822px;width:215px">/qtyfd</div>
<div class="td " style="left:1037px;width:120px"><span class="ok">正常</span></div>
<div class="td " style="left:1157px;width:100px">超级管理员</div>
<div class="td dt" style="left:1257px;width:180px">2025-10-25 17:22:49</div>
<div class="td " style="left:1437px;width:229px"><span class="ob g" style="left:18px"><svg style="left:7px;top:5px;width:11px;height:11px;opacity:.75" viewBox="0 0 15 15"><path d="M7 2.5H3A1.8 1.8 0 0 0 1.2 4.3V12A1.8 1.8 0 0 0 3 13.8h7.8A1.8 1.8 0 0 0 12.6 12V8" fill="none" stroke="currentColor" stroke-width="1.6"/><path d="M5 10.2 5.6 7.6 11.8 1.4l2 2L7.6 9.6Z" fill="none" stroke="currentColor" stroke-width="1.6" stroke-linejoin="round"/></svg><span class="t" style="left:25px">修改</span></span><span class="ob b" style="left:86px"><svg style="left:7px;top:5px;width:10px;height:10px;opacity:.6" viewBox="0 0 12 12"><rect x=".8" y=".8" width="10.4" height="10.4" rx="2.8" fill="none" stroke="currentColor" stroke-width="1.4"/><path d="M4.4 4v4M7.6 4v4" stroke="currentColor" stroke-width="1.5"/></svg><span class="t" style="left:25px">设计</span></span><span class="ob g" style="left:154px"><span class="t" style="left:5px">更多</span><svg style="left:38px;top:7px;width:9px;height:6px" viewBox="0 0 9 6"><path d="M.8 1l3.7 3.8L8.2 1" fill="none" stroke="currentColor" stroke-width=".9"/></svg></span></div>
</div>
<div class="tr" style="top:395px">
<div class="td en" style="left:0px;width:40px">12</div>
<div class="td " style="left:40px;width:40px"><span class="cb"></span></div>
<div class="td en" style="left:80px;width:100px">636</div>
<div class="td " style="left:180px;width:214px">其他应收单</div>
<div class="td en" style="left:394px;width:214px">erp_qtysd</div>
<div class="td " style="left:608px;width:214px">其他应收</div>
<div class="td en" style="left:822px;width:215px">/qtysd</div>
<div class="td " style="left:1037px;width:120px"><span class="ok">正常</span></div>
<div class="td " style="left:1157px;width:100px">超级管理员</div>
<div class="td dt" style="left:1257px;width:180px">2025-10-25 16:53:05</div>
<div class="td " style="left:1437px;width:229px"><span class="ob g" style="left:18px"><svg style="left:7px;top:5px;width:11px;height:11px;opacity:.75" viewBox="0 0 15 15"><path d="M7 2.5H3A1.8 1.8 0 0 0 1.2 4.3V12A1.8 1.8 0 0 0 3 13.8h7.8A1.8 1.8 0 0 0 12.6 12V8" fill="none" stroke="currentColor" stroke-width="1.6"/><path d="M5 10.2 5.6 7.6 11.8 1.4l2 2L7.6 9.6Z" fill="none" stroke="currentColor" stroke-width="1.6" stroke-linejoin="round"/></svg><span class="t" style="left:25px">修改</span></span><span class="ob b" style="left:86px"><svg style="left:7px;top:5px;width:10px;height:10px;opacity:.6" viewBox="0 0 12 12"><rect x=".8" y=".8" width="10.4" height="10.4" rx="2.8" fill="none" stroke="currentColor" stroke-width="1.4"/><path d="M4.4 4v4M7.6 4v4" stroke="currentColor" stroke-width="1.5"/></svg><span class="t" style="left:25px">设计</span></span><span class="ob g" style="left:154px"><span class="t" style="left:5px">更多</span><svg style="left:38px;top:7px;width:9px;height:6px" viewBox="0 0 9 6"><path d="M.8 1l3.7 3.8L8.2 1" fill="none" stroke="currentColor" stroke-width=".9"/></svg></span></div>
</div>
<div class="tr" style="top:428px">
<div class="td en" style="left:0px;width:40px">13</div>
<div class="td " style="left:40px;width:40px"><span class="cb"></span></div>
<div class="td en" style="left:80px;width:100px">635</div>
<div class="td " style="left:180px;width:214px">增减方式</div>
<div class="td en" style="left:394px;width:214px">erp_zjfs</div>
<div class="td " style="left:608px;width:214px">增减方式</div>
<div class="td en" style="left:822px;width:215px">/erpzjfs</div>
<div class="td " style="left:1037px;width:120px"><span class="ok">正常</span></div>
<div class="td " style="left:1157px;width:100px">超级管理员</div>
<div class="td dt" style="left:1257px;width:180px">2025-10-25 16:33:15</div>
<div class="td " style="left:1437px;width:229px"><span class="ob g" style="left:18px"><svg style="left:7px;top:5px;width:11px;height:11px;opacity:.75" viewBox="0 0 15 15"><path d="M7 2.5H3A1.8 1.8 0 0 0 1.2 4.3V12A1.8 1.8 0 0 0 3 13.8h7.8A1.8 1.8 0 0 0 12.6 12V8" fill="none" stroke="currentColor" stroke-width="1.6"/><path d="M5 10.2 5.6 7.6 11.8 1.4l2 2L7.6 9.6Z" fill="none" stroke="currentColor" stroke-width="1.6" stroke-linejoin="round"/></svg><span class="t" style="left:25px">修改</span></span><span class="ob b" style="left:86px"><svg style="left:7px;top:5px;width:10px;height:10px;opacity:.6" viewBox="0 0 12 12"><rect x=".8" y=".8" width="10.4" height="10.4" rx="2.8" fill="none" stroke="currentColor" stroke-width="1.4"/><path d="M4.4 4v4M7.6 4v4" stroke="currentColor" stroke-width="1.5"/></svg><span class="t" style="left:25px">设计</span></span><span class="ob g" style="left:154px"><span class="t" style="left:5px">更多</span><svg style="left:38px;top:7px;width:9px;height:6px" viewBox="0 0 9 6"><path d="M.8 1l3.7 3.8L8.2 1" fill="none" stroke="currentColor" stroke-width=".9"/></svg></span></div>
</div>
<div class="tr" style="top:461px">
<div class="td en" style="left:0px;width:40px">14</div>
<div class="td " style="left:40px;width:40px"><span class="cb"></span></div>
<div class="td en" style="left:80px;width:100px">633</div>
<div class="td " style="left:180px;width:214px">使用状况单</div>
<div class="td en" style="left:394px;width:214px">erp_syzkd</div>
<div class="td " style="left:608px;width:214px">使用状况</div>
<div class="td en" style="left:822px;width:215px">/syzkd</div>
<div class="td " style="left:1037px;width:120px"><span class="ok">正常</span></div>
<div class="td " style="left:1157px;width:100px">超级管理员</div>
<div class="td dt" style="left:1257px;width:180px">2025-10-25 16:19:54</div>
<div class="td " style="left:1437px;width:229px"><span class="ob g" style="left:18px"><svg style="left:7px;top:5px;width:11px;height:11px;opacity:.75" viewBox="0 0 15 15"><path d="M7 2.5H3A1.8 1.8 0 0 0 1.2 4.3V12A1.8 1.8 0 0 0 3 13.8h7.8A1.8 1.8 0 0 0 12.6 12V8" fill="none" stroke="currentColor" stroke-width="1.6"/><path d="M5 10.2 5.6 7.6 11.8 1.4l2 2L7.6 9.6Z" fill="none" stroke="currentColor" stroke-width="1.6" stroke-linejoin="round"/></svg><span class="t" style="left:25px">修改</span></span><span class="ob b" style="left:86px"><svg style="left:7px;top:5px;width:10px;height:10px;opacity:.6" viewBox="0 0 12 12"><rect x=".8" y=".8" width="10.4" height="10.4" rx="2.8" fill="none" stroke="currentColor" stroke-width="1.4"/><path d="M4.4 4v4M7.6 4v4" stroke="currentColor" stroke-width="1.5"/></svg><span class="t" style="left:25px">设计</span></span><span class="ob g" style="left:154px"><span class="t" style="left:5px">更多</span><svg style="left:38px;top:7px;width:9px;height:6px" viewBox="0 0 9 6"><path d="M.8 1l3.7 3.8L8.2 1" fill="none" stroke="currentColor" stroke-width=".9"/></svg></span></div>
</div>
<div class="tr" style="top:494px">
<div class="td en" style="left:0px;width:40px">15</div>
<div class="td " style="left:40px;width:40px"><span class="cb"></span></div>
<div class="td en" style="left:80px;width:100px">631</div>
<div class="td " style="left:180px;width:214px">存放位置</div>
<div class="td en" style="left:394px;width:214px">erp_cfwz</div>
<div class="td " style="left:608px;width:214px">存放位置</div>
<div class="td en" style="left:822px;width:215px">/erpcfwz</div>
<div class="td " style="left:1037px;width:120px"><span class="ok">正常</span></div>
<div class="td " style="left:1157px;width:100px">超级管理员</div>
<div class="td dt" style="left:1257px;width:180px">2025-10-25 16:07:03</div>
<div class="td " style="left:1437px;width:229px"><span class="ob g" style="left:18px"><svg style="left:7px;top:5px;width:11px;height:11px;opacity:.75" viewBox="0 0 15 15"><path d="M7 2.5H3A1.8 1.8 0 0 0 1.2 4.3V12A1.8 1.8 0 0 0 3 13.8h7.8A1.8 1.8 0 0 0 12.6 12V8" fill="none" stroke="currentColor" stroke-width="1.6"/><path d="M5 10.2 5.6 7.6 11.8 1.4l2 2L7.6 9.6Z" fill="none" stroke="currentColor" stroke-width="1.6" stroke-linejoin="round"/></svg><span class="t" style="left:25px">修改</span></span><span class="ob b" style="left:86px"><svg style="left:7px;top:5px;width:10px;height:10px;opacity:.6" viewBox="0 0 12 12"><rect x=".8" y=".8" width="10.4" height="10.4" rx="2.8" fill="none" stroke="currentColor" stroke-width="1.4"/><path d="M4.4 4v4M7.6 4v4" stroke="currentColor" stroke-width="1.5"/></svg><span class="t" style="left:25px">设计</span></span><span class="ob g" style="left:154px"><span class="t" style="left:5px">更多</span><svg style="left:38px;top:7px;width:9px;height:6px" viewBox="0 0 9 6"><path d="M.8 1l3.7 3.8L8.2 1" fill="none" stroke="currentColor" stroke-width=".9"/></svg></span></div>
</div>
<div class="tr" style="top:527px">
<div class="td en" style="left:0px;width:40px">16</div>
<div class="td " style="left:40px;width:40px"><span class="cb"></span></div>
<div class="td en" style="left:80px;width:100px">629</div>
<div class="td " style="left:180px;width:214px">资产信息</div>
<div class="td en" style="left:394px;width:214px">erp_zcxx</div>
<div class="td " style="left:608px;width:214px">资产管理</div>
<div class="td en" style="left:822px;width:215px">/zcxx</div>
<div class="td " style="left:1037px;width:120px"><span class="ok">正常</span></div>
<div class="td " style="left:1157px;width:100px">超级管理员</div>
<div class="td dt" style="left:1257px;width:180px">2025-10-25 15:50:11</div>
<div class="td " style="left:1437px;width:229px"><span class="ob g" style="left:18px"><svg style="left:7px;top:5px;width:11px;height:11px;opacity:.75" viewBox="0 0 15 15"><path d="M7 2.5H3A1.8 1.8 0 0 0 1.2 4.3V12A1.8 1.8 0 0 0 3 13.8h7.8A1.8 1.8 0 0 0 12.6 12V8" fill="none" stroke="currentColor" stroke-width="1.6"/><path d="M5 10.2 5.6 7.6 11.8 1.4l2 2L7.6 9.6Z" fill="none" stroke="currentColor" stroke-width="1.6" stroke-linejoin="round"/></svg><span class="t" style="left:25px">修改</span></span><span class="ob b" style="left:86px"><svg style="left:7px;top:5px;width:10px;height:10px;opacity:.6" viewBox="0 0 12 12"><rect x=".8" y=".8" width="10.4" height="10.4" rx="2.8" fill="none" stroke="currentColor" stroke-width="1.4"/><path d="M4.4 4v4M7.6 4v4" stroke="currentColor" stroke-width="1.5"/></svg><span class="t" style="left:25px">设计</span></span><span class="ob g" style="left:154px"><span class="t" style="left:5px">更多</span><svg style="left:38px;top:7px;width:9px;height:6px" viewBox="0 0 9 6"><path d="M.8 1l3.7 3.8L8.2 1" fill="none" stroke="currentColor" stroke-width=".9"/></svg></span></div>
</div>
<div class="tr" style="top:560px">
<div class="td en" style="left:0px;width:40px">17</div>
<div class="td " style="left:40px;width:40px"><span class="cb"></span></div>
<div class="td en" style="left:80px;width:100px">628</div>
<div class="td " style="left:180px;width:214px">费用单</div>
<div class="td en" style="left:394px;width:214px">erp_fyd</div>
<div class="td " style="left:608px;width:214px">费用</div>
<div class="td en" style="left:822px;width:215px">/fyd</div>
<div class="td " style="left:1037px;width:120px"><span class="ok">正常</span></div>
<div class="td " style="left:1157px;width:100px">超级管理员</div>
<div class="td dt" style="left:1257px;width:180px">2025-10-25 11:30:51</div>
<div class="td " style="left:1437px;width:229px"><span class="ob g" style="left:18px"><svg style="left:7px;top:5px;width:11px;height:11px;opacity:.75" viewBox="0 0 15 15"><path d="M7 2.5H3A1.8 1.8 0 0 0 1.2 4.3V12A1.8 1.8 0 0 0 3 13.8h7.8A1.8 1.8 0 0 0 12.6 12V8" fill="none" stroke="currentColor" stroke-width="1.6"/><path d="M5 10.2 5.6 7.6 11.8 1.4l2 2L7.6 9.6Z" fill="none" stroke="currentColor" stroke-width="1.6" stroke-linejoin="round"/></svg><span class="t" style="left:25px">修改</span></span><span class="ob b" style="left:86px"><svg style="left:7px;top:5px;width:10px;height:10px;opacity:.6" viewBox="0 0 12 12"><rect x=".8" y=".8" width="10.4" height="10.4" rx="2.8" fill="none" stroke="currentColor" stroke-width="1.4"/><path d="M4.4 4v4M7.6 4v4" stroke="currentColor" stroke-width="1.5"/></svg><span class="t" style="left:25px">设计</span></span><span class="ob g" style="left:154px"><span class="t" style="left:5px">更多</span><svg style="left:38px;top:7px;width:9px;height:6px" viewBox="0 0 9 6"><path d="M.8 1l3.7 3.8L8.2 1" fill="none" stroke="currentColor" stroke-width=".9"/></svg></span></div>
</div>
<div class="tr" style="top:593px">
<div class="td en" style="left:0px;width:40px">18</div>
<div class="td " style="left:40px;width:40px"><span class="cb"></span></div>
<div class="td en" style="left:80px;width:100px">627</div>
<div class="td " style="left:180px;width:214px">折旧摊销方法</div>
<div class="td en" style="left:394px;width:214px">erp_zjtxff</div>
<div class="td " style="left:608px;width:214px">折旧摊销</div>
<div class="td en" style="left:822px;width:215px">/zjtxff</div>
<div class="td " style="left:1037px;width:120px"><span class="ok">正常</span></div>
<div class="td " style="left:1157px;width:100px">超级管理员</div>
<div class="td dt" style="left:1257px;width:180px">2025-10-25 11:22:51</div>
<div class="td " style="left:1437px;width:229px"><span class="ob g" style="left:18px"><svg style="left:7px;top:5px;width:11px;height:11px;opacity:.75" viewBox="0 0 15 15"><path d="M7 2.5H3A1.8 1.8 0 0 0 1.2 4.3V12A1.8 1.8 0 0 0 3 13.8h7.8A1.8 1.8 0 0 0 12.6 12V8" fill="none" stroke="currentColor" stroke-width="1.6"/><path d="M5 10.2 5.6 7.6 11.8 1.4l2 2L7.6 9.6Z" fill="none" stroke="currentColor" stroke-width="1.6" stroke-linejoin="round"/></svg><span class="t" style="left:25px">修改</span></span><span class="ob b" style="left:86px"><svg style="left:7px;top:5px;width:10px;height:10px;opacity:.6" viewBox="0 0 12 12"><rect x=".8" y=".8" width="10.4" height="10.4" rx="2.8" fill="none" stroke="currentColor" stroke-width="1.4"/><path d="M4.4 4v4M7.6 4v4" stroke="currentColor" stroke-width="1.5"/></svg><span class="t" style="left:25px">设计</span></span><span class="ob g" style="left:154px"><span class="t" style="left:5px">更多</span><svg style="left:38px;top:7px;width:9px;height:6px" viewBox="0 0 9 6"><path d="M.8 1l3.7 3.8L8.2 1" fill="none" stroke="currentColor" stroke-width=".9"/></svg></span></div>
</div>
<div class="tr" style="top:626px">
<div class="td en" style="left:0px;width:40px">19</div>
<div class="td " style="left:40px;width:40px"><span class="cb"></span></div>
<div class="td en" style="left:80px;width:100px">626</div>
<div class="td " style="left:180px;width:214px">资产属性</div>
<div class="td en" style="left:394px;width:214px">erp_zcsx</div>
<div class="td " style="left:608px;width:214px">资产管理</div>
<div class="td en" style="left:822px;width:215px">/zcsx</div>
<div class="td " style="left:1037px;width:120px"><span class="ok">正常</span></div>
<div class="td " style="left:1157px;width:100px">超级管理员</div>
<div class="td dt" style="left:1257px;width:180px">2025-10-25 10:19:35</div>
<div class="td " style="left:1437px;width:229px"><span class="ob g" style="left:18px"><svg style="left:7px;top:5px;width:11px;height:11px;opacity:.75" viewBox="0 0 15 15"><path d="M7 2.5H3A1.8 1.8 0 0 0 1.2 4.3V12A1.8 1.8 0 0 0 3 13.8h7.8A1.8 1.8 0 0 0 12.6 12V8" fill="none" stroke="currentColor" stroke-width="1.6"/><path d="M5 10.2 5.6 7.6 11.8 1.4l2 2L7.6 9.6Z" fill="none" stroke="currentColor" stroke-width="1.6" stroke-linejoin="round"/></svg><span class="t" style="left:25px">修改</span></span><span class="ob b" style="left:86px"><svg style="left:7px;top:5px;width:10px;height:10px;opacity:.6" viewBox="0 0 12 12"><rect x=".8" y=".8" width="10.4" height="10.4" rx="2.8" fill="none" stroke="currentColor" stroke-width="1.4"/><path d="M4.4 4v4M7.6 4v4" stroke="currentColor" stroke-width="1.5"/></svg><span class="t" style="left:25px">设计</span></span><span class="ob g" style="left:154px"><span class="t" style="left:5px">更多</span><svg style="left:38px;top:7px;width:9px;height:6px" viewBox="0 0 9 6"><path d="M.8 1l3.7 3.8L8.2 1" fill="none" stroke="currentColor" stroke-width=".9"/></svg></span></div>
</div>
<div class="abs" style="left:1666px;top:32px;width:17px;height:616px;background:#fdfdfd"></div>
<svg class="abs" style="left:1671px;top:39px;width:7px;height:4px" viewBox="0 0 7 4"><path d="M0 4 3.5 0 7 4Z" fill="#a0a0a0"/></svg>
<svg class="abs" style="left:1671px;top:638px;width:7px;height:4px" viewBox="0 0 7 4"><path d="M0 0 3.5 4 7 0Z" fill="#8f8f8f"/></svg>
<div class="abs" style="left:1668px;top:49px;width:13px;height:218px;background:#b0b0b0"></div>
</div>
<div class="abs" style="left:229px;top:880px;width:1684px;height:1px;background:#7caaf8"></div>
<div class="pg" style="left:1181px;font-size:14px">共 <i class="en">493</i> 条</div>
<div class="pg" style="left:1257px;width:28px;border:1px solid #e3e3e3;border-radius:4px"><svg class="abs" style="left:9px;top:8px;width:8px;height:10px" viewBox="0 0 8 10"><path d="M6 1 2 5l4 4" fill="none" stroke="#c4c4c4" stroke-width="1.3"/></svg></div>
<div class="pg" style="left:1293px;width:28px;border:1px solid #3b82f6;border-radius:4px;color:#3b82f6;line-height:25px">1</div>
<div class="pg" style="left:1329px;width:28px;">2</div>
<div class="pg" style="left:1365px;width:28px;">3</div>
<div class="pg" style="left:1401px;width:28px;">4</div>
<div class="pg" style="left:1437px;width:28px;">5</div>
<div class="pg" style="left:1473px;width:28px;">6</div>
<div class="pg" style="left:1509px;width:28px;">7</div>
<div class="pg" style="left:1545px;width:28px;font-size:11px;color:#444;letter-spacing:.5px;">···</div>
<div class="pg" style="left:1581px;width:28px;">10</div>
<div class="pg" style="left:1617px;width:28px;border:1px solid #e3e3e3;border-radius:4px"><svg class="abs" style="left:10px;top:8px;width:8px;height:10px" viewBox="0 0 8 10"><path d="M2 1l4 4-4 4" fill="none" stroke="#262626" stroke-width="1.3"/></svg></div>
<div class="pg" style="left:1653px;width:82px;border:1px solid #e3e3e3;border-radius:4px;text-align:left;padding-left:12px;line-height:25px">50 / <b style="font-size:14px">页</b><svg class="abs" style="left:60px;top:10px;width:10px;height:7px" viewBox="0 0 10 7"><path d="M1 1l4 4 4-4" fill="none" stroke="#c4c4c4" stroke-width="1.2"/></svg></div>
<div class="pg" style="left:1745px;font-size:14px">显示 <i class="en">1 - 50</i> 条，共 <i class="en">493</i> 条</div>
<div id="mask"></div>
<div class="abs" style="left:1905px;top:558px;width:13px;height:76px;border-radius:7px;background:#b9b9b9"></div>
<div class="abs" style="left:1907px;top:560px;width:9px;height:72px;border-radius:5px;background:linear-gradient(#6d6d6d 0,#6d6d6d 9%,#f47f20 10%,#ff8c2e 60%,#ffb868 90%,#ffd9a0 100%)"></div>
<svg class="abs" style="left:1787px;top:871px;width:28px;height:23px" viewBox="0 0 28 23"><path d="M1 9 12 2 6 19Z" fill="rgba(70,90,135,.6)"/><circle cx="19" cy="9" r="7" fill="rgba(225,125,85,.6)"/><path d="M10 22C12 14 18 10 26 10 21 15 16 20 10 22Z" fill="rgba(70,90,135,.65)"/></svg>
<div class="abs" style="left:1815px;top:865px;font-size:23.5px;line-height:34px;font-weight:700;transform:skewX(-9deg);color:rgba(62,80,122,.68);white-space:nowrap">泛普软件</div>
<div class="abs" style="left:1789px;top:894px;font-family:'Liberation Serif',serif;font-weight:bold;font-size:12px;line-height:14px;color:rgba(225,100,70,.55);white-space:nowrap;letter-spacing:1.1px">www.fanpusoft.com</div>
<div id="modal">
<div class="abs" style="left:23px;top:20px;font-size:18px;line-height:26px;color:#262626;white-space:nowrap">新增表单</div>
<div class="abs" style="left:917px;top:23px;width:22px;height:22px;border-radius:4px;background:#e9e9e9"><svg class="abs" style="left:4.5px;top:4.5px;width:13px;height:13px" viewBox="0 0 13 13"><path d="M.8.8l11.4 11.4M12.2.8.8 12.2" stroke="#666" stroke-width="1.3"/></svg></div>
<div class="mt on" style="left:24px">基本信息</div>
<div class="mt" style="left:118px">新增事件</div>
<div class="mt" style="left:212px">修改事件</div>
<div class="mt" style="left:306px">删除事件</div>
<div class="abs" style="left:24px;top:106px;width:913px;height:1px;background:#f0f0f0"></div>
<div class="abs" style="left:25px;top:106px;width:88px;height:1px;background:#fff"></div>
<div class="fl" style="left:24px;top:115px;width:120px;height:37px"><i>*</i>表单名称<b class="c">:</b></div>
<div class="fl" style="left:24px;top:152px;width:120px;height:37px"><i>*</i>上级菜单<b class="c">:</b></div>
<div class="fl" style="left:24px;top:189px;width:120px;height:37px"><i>*</i>表单状态<b class="c">:</b></div>
<div class="fl" style="left:480px;top:115px;width:120px;height:37px"><i>*</i>数据库表名<b class="c">:</b></div>
<div class="fl" style="left:480px;top:152px;width:120px;height:37px"><i>*</i>菜单路径<b class="c">:</b></div>
<div class="fl" style="left:480px;top:189px;width:120px;height:37px"></div>
<div class="ln" style="left:24px;top:115px;width:913px;height:1px"></div>
<div class="ln" style="left:24px;top:152px;width:913px;height:1px"></div>
<div class="ln" style="left:24px;top:189px;width:913px;height:1px"></div>
<div class="ln" style="left:24px;top:226px;width:913px;height:1px"></div>
<div class="ln" style="left:24px;top:115px;width:1px;height:112px"></div>
<div class="ln" style="left:144px;top:115px;width:1px;height:112px"></div>
<div class="ln" style="left:480px;top:115px;width:1px;height:112px"></div>
<div class="ln" style="left:600px;top:115px;width:1px;height:112px"></div>
<div class="ln" style="left:936px;top:115px;width:1px;height:112px"></div>
<div class="inp" style="left:149px;top:120px;width:327px">请输入表单名称</div>
<div class="inp" style="left:149px;top:157px;width:327px;padding-left:11px">请选择上级菜单<svg class="abs" style="right:10px;top:9px;width:12px;height:9px" viewBox="0 0 12 9"><path d="M1 2l5 5 5-5" fill="none" stroke="#bfbfbf" stroke-width="1.2"/></svg></div>
<div class="inp" style="left:605px;top:120px;width:327px">请输入数据库表名</div>
<div class="inp" style="left:605px;top:157px;width:327px">请输入菜单路径<svg class="abs" style="right:12px;top:7px;width:13px;height:13px" viewBox="0 0 14 14"><g fill="none" stroke="#3b82f6" stroke-width="1.2"><path d="M1.5 6A5.6 5.6 0 0 1 12 4.2M12.5 8A5.6 5.6 0 0 1 2 9.8"/><path d="M12.4 1.4v3h-3M1.6 12.6v-3h3"/></g></svg></div>
<div class="abs" style="left:149px;top:199px;width:59px;height:18px;border-radius:9px;background:#3b82f6;color:#fff;line-height:18px;padding-left:8px;white-space:nowrap">正常<span class="abs" style="left:43px;top:2px;width:14px;height:14px;border-radius:7px;background:#fff"></span></div>
<div class="btn" style="left:781px;top:271px;width:72px;color:#262626"><svg style="left:13px;top:7px;width:11px;height:11px" viewBox="0 0 11 11"><path d="M.6.6l9.8 9.8M10.4.6.6 10.4" stroke="currentColor" stroke-width="1.1"/></svg><span class="t" style="left:33px">取消</span></div>
<div class="btn" style="left:865px;top:271px;width:72px;border-color:#3b82f6;color:#3b82f6"><svg style="left:12px;top:7px;width:13px;height:12px" viewBox="0 0 13 12"><path d="M.8 7.2 5.4 11 12.2.8" fill="none" stroke="currentColor" stroke-width="1.1"/></svg><span class="t" style="left:33px">确定</span></div>
</div>
</body></html>
